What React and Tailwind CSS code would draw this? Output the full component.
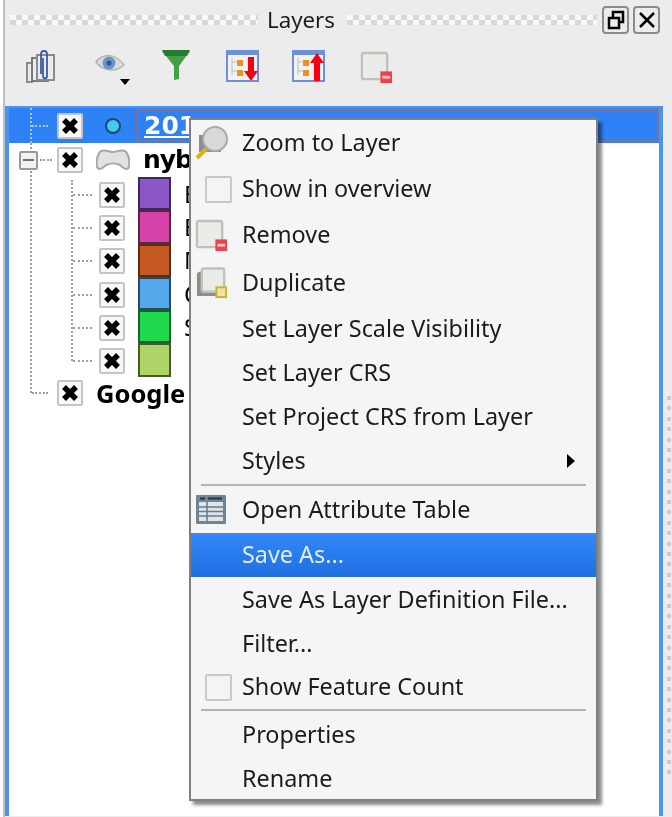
import React from "react";

const Dots = ({ className }) => (
  <div
    className={`h-[10px] bg-[conic-gradient(#d8d8d8_25%,#f8f8f8_0_50%,#d8d8d8_0_75%,#f8f8f8_0)] bg-[length:12px_10px] ${className}`}
  />
);

const Check = ({ className }) => (
  <div
    className={`flex items-center justify-center w-[26px] h-[26px] bg-[#f8f8f8] border-2 border-[#c4c4c4] rounded-[2px] shrink-0 ${className || ""}`}
  >
    <svg width="20" height="20" viewBox="0 0 20 20">
      <path d="M4 4L16 16M16 4L4 16" stroke="#000" strokeWidth="5.500" />
    </svg>
  </div>
);

const RemoveIcon = ({ size = 33 }) => (
  <svg width={size} height={size} viewBox="0 0 34 34">
    <rect x="2" y="2" width="26" height="27" rx="2" fill="#ebebe8" stroke="#c0c0bc" strokeWidth="2.500" />
    <rect x="21" y="21" width="12" height="12" fill="#f0404c" />
    <rect x="23" y="25.500" width="8" height="3" fill="#fbc4c8" />
  </svg>
);

const DuplicateIcon = () => (
  <svg width="33" height="33" viewBox="0 0 34 34">
    <path d="M4 5h22v25H2V7z" fill="#8e8e86" />
    <rect x="7" y="1.500" width="23" height="24" rx="2" fill="#ebebe8" stroke="#c0c0bc" strokeWidth="2.500" />
    <rect x="21" y="20" width="12" height="12" fill="#cdb030" />
    <rect x="23" y="22" width="8" height="8" fill="#efe6a0" />
  </svg>
);

const MagnifierIcon = () => (
  <svg width="34" height="34" viewBox="0 0 34 34">
    <rect x="4" y="9" width="22" height="17" fill="#8f8a96" />
    <circle cx="20" cy="13" r="12" fill="#d9d9db" stroke="#a9a9a9" strokeWidth="2" />
    <path d="M2 32L11 23" stroke="#e0b020" strokeWidth="4" />
  </svg>
);

const TableIcon = () => (
  <svg width="30" height="30" viewBox="0 0 30 30">
    <rect x="0" y="0" width="30" height="29" rx="1" fill="#6f8494" />
    <rect x="3" y="7" width="24" height="19" fill="#dfe4e8" />
    <path d="M4 3.500h5M12 3.500h14" stroke="#253545" strokeWidth="2" />
    <path d="M3 12h24M3 16.500h24M3 21h24M11 7v19" stroke="#66798a" strokeWidth="1.500" />
  </svg>
);

const ArrowIcon = ({ up, className }) => (
  <svg className={className} width="33" height="32" viewBox="0 0 33 32">
    <rect x="0" y="0" width="33" height="32" fill="#6f8fd8" />
    <rect x="2" y="5" width="29" height="25" fill="#f2f2f4" />
    <path d="M6 8v17M6 12h5M6 21h5" stroke="#bcbcbc" strokeWidth="1" fill="none" />
    <rect x="11" y="10" width="6" height="6" fill="#f09020" />
    <rect x="11" y="20" width="6" height="6" fill="#f09020" />
    <path
      d={up ? "M25 3L32 13H28V31H22V13H18Z" : "M22 7H28V21H32L25 31L18 21H22Z"}
      fill="#f80010"
    />
  </svg>
);

const rows = [
  { bg: "bg-[#8a56c8]", line: "border-[#3a2a55]", label: "B" },
  { bg: "bg-[#d643a8]", line: "border-[#55254a]", label: "B" },
  { bg: "bg-[#c45a22]", line: "border-[#553018]", label: "M" },
  { bg: "bg-[#56a8ec]", line: "border-[#264a66]", label: "Q" },
  { bg: "bg-[#1fda4c]", line: "border-[#186030]", label: "S" },
  { bg: "bg-[#aed468]", line: "border-[#485a28]", label: "" },
];

const Dash = ({ className }) => (
  <div className={`border-t-2 border-dotted border-[#a0a0a0] ${className}`} />
);

const MenuRow = ({ label, icon, active, arrow, className }) => (
  <div
    className={`flex items-center h-[44px] relative ${
      active ? "bg-gradient-to-b from-[#3388fb] to-[#1f6fe0] text-[#e0edff]" : "text-[#1c1c1c]"
    } ${className || ""}`}
  >
    <div className="w-[51px] flex shrink-0">{icon}</div>
    <span>{label}</span>
    {arrow && (
      <svg className="absolute right-[20px]" width="10" height="14" viewBox="0 0 10 14">
        <path d="M1 0L9 7L1 14Z" fill="#000" />
      </svg>
    )}
  </div>
);

const MenuCheck = () => (
  <div className="w-[27px] h-[27px] bg-[#f4f4f4] border-2 border-[#c8c8c8] rounded-[2px] ml-[14px]" />
);

const Sep = ({ className }) => (
  <div className={className}>
    <div className="w-[385px] h-[2px] bg-[#b4b4b4] ml-[10px]" />
  </div>
);

const IconBox = ({ children }) => <div className="ml-[4px]">{children}</div>;

export default function App() {
  return (
    <div className="w-[672px] h-[817px] bg-[#ececec] overflow-hidden relative border-l-[3px] border-white blur-[0.4px] font-['Noto_Sans',sans-serif]">
      <div className="h-full flex flex-col border-l-2 border-[#c0c0c0]">
        <div className="flex items-center h-[40px] pl-[5px] shrink-0">
          <Dots className="w-[248px]" />
          <span className="w-[89px] text-center text-[22.300px] text-[#1c1c1c] pr-[3px]">Layers</span>
          <Dots className="w-[250px]" />
          <button className="w-[27px] h-[28px] ml-[5px] border-2 border-[#8c8c8c] rounded-[4px] flex items-center justify-center">
            <svg width="18" height="20" viewBox="0 0 18 20" fill="none" stroke="#000" strokeWidth="2.500">
              <rect x="6" y="2" width="10" height="10" />
              <rect x="2" y="8" width="10" height="10" fill="#ececec" />
            </svg>
          </button>
          <button className="w-[27px] h-[28px] ml-[4px] border-2 border-[#8c8c8c] rounded-[4px] flex items-center justify-center">
            <svg width="18" height="16" viewBox="0 0 18 16">
              <path d="M2 1L16 15M16 1L2 15" stroke="#000" strokeWidth="2.500" />
            </svg>
          </button>
        </div>

        <div className="flex items-center h-[52px] shrink-0">
          <svg className="ml-[20px]" width="32" height="36" viewBox="0 0 32 36" fill="none">
            <path d="M8 34H2V15h6" stroke="#8a8a8a" strokeWidth="2" />
            <rect x="7" y="10" width="16" height="23" fill="#ececec" stroke="#777" strokeWidth="2" />
            <rect x="12" y="7" width="17" height="25" fill="#ececec" stroke="#8a8a8a" strokeWidth="2" />
            <path d="M16 26V6c0-4 6-4 6 0v22c0 3-4 3-4 0V10" stroke="#3a5aa8" strokeWidth="1.800" />
          </svg>
          <div className="relative w-[36px] h-[36px] ml-[37px]">
            <svg className="absolute top-[5px]" width="32" height="21" viewBox="0 0 30 21">
              <path d="M1 9C8 0 20 0 29 12C20 20 8 18 1 9Z" fill="#dcdcdc" stroke="#b4b4b4" strokeWidth="1.500" />
              <circle cx="14" cy="10" r="6.500" fill="#6a94cc" />
              <circle cx="14" cy="10" r="2.500" fill="#34558c" />
            </svg>
            <svg className="absolute right-0 bottom-[-1px]" width="10" height="6" viewBox="0 0 10 6">
              <path d="M0 0H10L5 6Z" fill="#000" />
            </svg>
          </div>
          <svg className="ml-[31px] -translate-y-px" width="30" height="32" viewBox="0 0 30 32">
            <path d="M1 2H29L18 17V30L13 31V17Z" fill="#45a045" />
            <path d="M1 1H29L26 7H4Z" fill="#2a7a30" />
          </svg>
          <ArrowIcon className="ml-[35px]" />
          <ArrowIcon up className="ml-[33px]" />
          <div className="ml-[35px] translate-y-px">
            <RemoveIcon />
          </div>
        </div>

        <div className="flex-1 mt-[14px] mr-[9px] mb-[1px] border-x-4 border-t-2 border-[#4d94f2] bg-white text-[#000] text-[25px] font-bold">
          <div className="h-[35px] bg-[#2f82f6] flex items-center relative">
            <div className="absolute left-[21px] top-0 bottom-0 border-l-2 border-dotted border-[#a8c4e8]" />
            <Dash className="w-[16px] ml-[23px] mr-[9px] border-[#a8c4e8]" />
            <Check />
            <svg className="ml-[22px]" width="16" height="16" viewBox="0 0 16 16">
              <circle cx="8" cy="8" r="7" fill="#45c8f0" stroke="#124a70" strokeWidth="2" />
            </svg>
            <span className="ml-[15px] pl-[6px] text-white underline font-['DejaVu_Sans',sans-serif] border-2 border-dotted border-[#d0602a] flex-1 h-[33px] leading-[30px]">
              201
            </span>
          </div>

          <div className="relative">
            <div className="absolute left-[21px] top-0 h-[250px] border-l-2 border-dotted border-[#a0a0a0]" />
            <div className="h-[34px] flex items-center relative">
              <div className="ml-[10px] w-[19px] h-[19px] border-2 border-[#9a9a9a] rounded-[2px] bg-[#f2f2f2] flex items-center justify-center">
                <div className="w-[11px] h-[2px] bg-[#707070]" />
              </div>
              <Dash className="w-[12px] ml-[2px] mr-[5px]" />
              <Check />
              <svg className="ml-[13px]" width="34" height="24" viewBox="0 0 34 24">
                <path d="M5 3C10 1 13 4 17 4C21 4 25 1 29 3C33 6 34 14 33 19C31 23 27 20 24 17C20 15 14 15 10 17C7 20 3 23 1 19C0 14 1 6 5 3Z" fill="#e2e2e2" stroke="#a8a8a8" strokeWidth="2" />
              </svg>
              <span className="ml-[13px] font-['DejaVu_Sans',sans-serif] tracking-[-1px]">nyb</span>
            </div>
            <div className="relative ml-[62px]">
              <div className="absolute left-0 top-[3px] h-[181px] border-l-2 border-dotted border-[#a0a0a0]" />
              {rows.map((row) => (
                <div key={row.bg} className="h-[33.300px] flex items-center">
                  <Dash className="w-[19px] ml-[2px] mr-[7px] mt-[2px]" />
                  <Check className="mt-[2px]" />
                  <div className={`ml-[13px] w-[33px] h-[33.300px] border-2 shrink-0 ${row.bg} ${row.line}`} />
                  <span className="ml-[13px] w-[5px] overflow-hidden text-[24px] font-normal">{row.label}</span>
                </div>
              ))}
            </div>
            <div className="h-[32px] flex items-center">
              <Dash className="w-[16px] ml-[23px] mr-[9px]" />
              <Check />
              <span className="ml-[13px] text-[25.500px] whitespace-nowrap">Google</span>
            </div>
          </div>
        </div>
      </div>

      <div className="absolute w-[4px] h-[380px] left-[664px] top-[396px] bg-[repeating-linear-gradient(to_bottom,#cccccc_0,#cccccc_4px,transparent_4px,transparent_10.400px)]" />

      <div className="absolute left-[186px] top-[118px] w-[409px] h-[683px] bg-[#f5f5f5] border-2 border-[#808080] shadow-[4px_4px_3px_rgba(0,0,0,0.45)] text-[23.400px] pt-[1px]">
        <MenuRow label="Zoom to Layer" icon={<IconBox><MagnifierIcon /></IconBox>} />
        <MenuRow label="Show in overview" icon={<MenuCheck />} className="mt-[2px]" />
        <MenuRow label="Remove" icon={<IconBox><RemoveIcon /></IconBox>} className="mt-[2px]" />
        <MenuRow label="Duplicate" icon={<IconBox><DuplicateIcon /></IconBox>} className="mt-[4px]" />
        <MenuRow label="Set Layer Scale Visibility" className="mt-[2px]" />
        <MenuRow label="Set Layer CRS" />
        <MenuRow label="Set Project CRS from Layer" />
        <MenuRow label="Styles" arrow />
        <Sep className="pt-[1px] pb-[2px]" />
        <MenuRow label="Open Attribute Table" icon={<div className="ml-[5px]"><TableIcon /></div>} />
        <MenuRow label="Save As..." active className="mt-[1px]" />
        <MenuRow label="Save As Layer Definition File..." className="mt-[1px]" />
        <MenuRow label="Filter..." />
        <MenuRow label="Show Feature Count" icon={<MenuCheck />} className="mt-[-1px]" />
        <Sep className="pb-[2px]" />
        <MenuRow label="Properties" />
        <MenuRow label="Rename" />
      </div>
    </div>
  );
}
